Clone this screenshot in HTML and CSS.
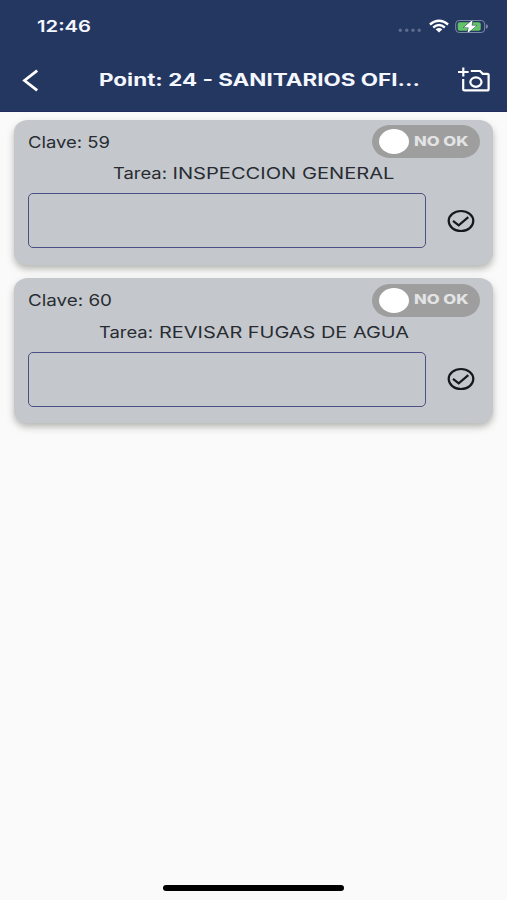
FILE: index.html
```html
<!DOCTYPE html>
<html lang="es">
<head>
<meta charset="utf-8">
<meta name="viewport" content="width=device-width, initial-scale=1">
<title>Point: 24</title>
<link rel="stylesheet" href="styles.css">
</head>
<body>
<div class="screen">
  <header class="header">
    <div class="status">
      <svg class="time" width="56" height="20"><text x="0" y="14.3" textLength="54" lengthAdjust="spacingAndGlyphs">12:46</text></svg>
      <div class="indicators">
        <svg width="24" height="20" fill="#5d6b8e"><circle cx="2.3" cy="12.3" r="1.7"/><circle cx="8.7" cy="12.3" r="1.7"/><circle cx="15" cy="12.3" r="1.7"/><circle cx="21.2" cy="12.3" r="1.7"/></svg>
        <svg width="20" height="20" viewBox="0 0 20 20" fill="none" stroke="#fff" stroke-width="2.3"><path d="M.9 6.5Q10-1 19.1 6.5"/><path d="M4.2 9.5Q10 4.6 15.8 9.5"/><path d="M6.6 11.3Q10 8.7 13.4 11.3L10 14.5Z" fill="#fff" stroke="none"/></svg>
        <svg width="34" height="20" viewBox="0 0 34 20"><rect x=".7" y="2.5" width="29" height="12" rx="3.5" fill="none" stroke="#7e8aa5"/><rect x="2.7" y="4.3" width="23" height="8.4" rx="2" fill="#62c466"/><path d="M31 6.2Q33 6.8 33 8.5T31 10.8Z" fill="#7e8aa5"/><path d="M17.6 1.8 8.6 9.4H13.6L12.4 15.2 21.7 7.4H16.7Z" fill="#fff" stroke="#243761" stroke-width="1" paint-order="stroke"/></svg>
      </div>
    </div>
    <div class="navbar">
      <svg class="back" width="18" height="24" viewBox="0 0 18 24" fill="none" stroke="#fff" stroke-width="2.8"><path d="M15.2 2.6 2.5 12.5 15.2 22.4"/></svg>
      <svg class="title" width="324" height="24"><text x="0" y="18.4" textLength="321" lengthAdjust="spacingAndGlyphs">Point: 24 - SANITARIOS OFI...</text></svg>
      <svg class="camera" width="32" height="26" viewBox="0 0 32 26" fill="none" stroke="#fff" stroke-width="2.2"><path d="M0 5H10.6M5.3 .4V9.6"/><path d="M5.2 12V22.3Q5.2 23.4 6.5 23.4H29Q30.6 23.4 30.6 22.2V8Q30.6 6.8 29 6.8H24.8L22 4H12.8"/><ellipse cx="17.9" cy="15.1" rx="5.6" ry="4.7"/></svg>
    </div>
  </header>
  <main class="list">
    <section class="card">
      <div class="card-top">
        <svg class="label" width="84" height="20"><text x="0" y="15" textLength="82" lengthAdjust="spacingAndGlyphs">Clave: 59</text></svg>
        <div class="toggle"><span class="knob"></span><svg class="toggle-label" width="56" height="16"><text x="0" y="12.3" textLength="54.5" lengthAdjust="spacingAndGlyphs">NO OK</text></svg></div>
      </div>
      <svg class="label task" width="282" height="22"><text y="15"><tspan x="0" textLength="54" lengthAdjust="spacingAndGlyphs">Tarea:</tspan> <tspan x="59.5" textLength="222" lengthAdjust="spacingAndGlyphs">INSPECCION GENERAL</tspan></text></svg>
      <div class="entry">
        <div class="field"></div>
        <svg class="check" width="28" height="24" viewBox="0 0 28 24" fill="none" stroke="#15181c" stroke-width="2.2"><ellipse cx="14" cy="12" rx="12.3" ry="10"/><path d="M6 11.8 11.7 16.3 21.3 8.2"/></svg>
      </div>
    </section>
    <section class="card">
      <div class="card-top">
        <svg class="label" width="86" height="20"><text x="0" y="15" textLength="84" lengthAdjust="spacingAndGlyphs">Clave: 60</text></svg>
        <div class="toggle"><span class="knob"></span><svg class="toggle-label" width="56" height="16"><text x="0" y="12.3" textLength="54.5" lengthAdjust="spacingAndGlyphs">NO OK</text></svg></div>
      </div>
      <svg class="label task" width="310" height="22"><text y="15"><tspan x="0" textLength="54" lengthAdjust="spacingAndGlyphs">Tarea:</tspan> <tspan x="60" textLength="250" lengthAdjust="spacingAndGlyphs">REVISAR FUGAS DE AGUA</tspan></text></svg>
      <div class="entry">
        <div class="field"></div>
        <svg class="check" width="28" height="24" viewBox="0 0 28 24" fill="none" stroke="#15181c" stroke-width="2.2"><ellipse cx="14" cy="12" rx="12.3" ry="10"/><path d="M6 11.8 11.7 16.3 21.3 8.2"/></svg>
      </div>
    </section>
  </main>
  <div class="home-bar"></div>
</div>
</body>
</html>
```
FILE: styles.css
```css
* { box-sizing: border-box; }
body { margin: 0; font-family: Inter, "Liberation Sans", sans-serif; }
svg { display: block; flex: none; overflow: visible; }
.screen { height: 900px; display: flex; flex-direction: column; background: #fafafa; overflow: hidden; }
.header { height: 111.5px; flex: none; background: #243761; border-bottom: 1px solid #242b61; padding-top: 18px; }
.status { display: flex; justify-content: space-between; height: 20px; padding: 0 18.5px 0 37px; }
.time text { font-size: 16px; font-weight: 600; fill: #f6f8ff; }
.indicators { display: flex; }
.indicators svg:nth-child(1) { margin-right: 7px; }
.indicators svg:nth-child(2) { margin-right: 6px; }
.navbar { display: flex; align-items: center; height: 46px; margin-top: 19px; padding: 0 17px 0 22px; }
.title { margin-left: 58.5px; }
.title text { font-size: 17px; font-weight: 700; fill: #f4f7ff; }
.camera { margin-left: auto; }
.list { flex: 1; padding: 8px 14px; display: flex; flex-direction: column; gap: 13.5px; }
.card { height: 145px; padding: 5.5px 13.5px 0 14px; border-radius: 14px / 12px; background: #c4c8cd; box-shadow: 0 4px 7px rgba(70, 75, 65, .38); }
.card-top { display: flex; justify-content: space-between; height: 33px; }
.label text { font-size: 16px; font-weight: 400; fill: #282c32; }
.card-top .label { margin: 7.5px 0 0 -.5px; }
.toggle { width: 108px; height: 33px; border-radius: 18px / 16.5px; background: #9e9e9e; display: flex; align-items: center; padding-left: 7px; }
.knob { width: 30px; height: 25px; border-radius: 50%; background: #fff; }
.toggle-label { margin-left: 5.5px; }
.toggle-label text { font-size: 13px; font-weight: 800; fill: #e2e3e4; }
.task { margin: 6px auto 0; }
.entry { display: flex; align-items: center; margin-top: 7px; }
.field { width: 398px; height: 55px; border: 1.5px solid #4b5085; border-radius: 5px; }
.check { margin-left: 21px; }
.home-bar { width: 181px; height: 6px; border-radius: 3px; background: #000; margin: 0 auto 9px; }
```
